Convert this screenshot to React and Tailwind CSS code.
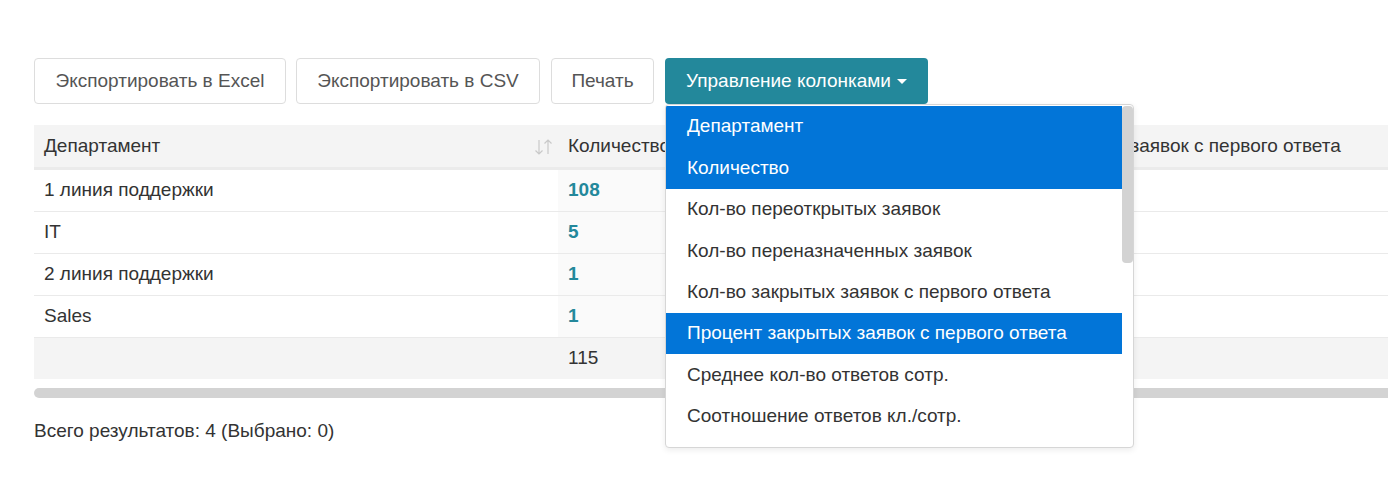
import React from 'react';

const options = [
  { label: 'Департамент', active: true },
  { label: 'Количество', active: true },
  { label: 'Кол-во переоткрытых заявок', active: false },
  { label: 'Кол-во переназначенных заявок', active: false },
  { label: 'Кол-во закрытых заявок с первого ответа', active: false },
  { label: 'Процент закрытых заявок с первого ответа', active: true },
  { label: 'Среднее кол-во ответов сотр.', active: false },
  { label: 'Соотношение ответов кл./сотр.', active: false },
];

const rows = [
  { dept: '1 линия поддержки', count: 108 },
  { dept: 'IT', count: 5 },
  { dept: '2 линия поддержки', count: 1 },
  { dept: 'Sales', count: 1 },
];

function SortIcon() {
  return (
    <svg width="20" height="18" viewBox="0 0 20 18" fill="none" stroke="#c9c9c9" strokeWidth="1.2">
      <path d="M6 2v14M2.5 12.5L6 16l3.5-3.5" />
      <path d="M15 16V2M11.5 5.5L15 2l3.5 3.5" />
    </svg>
  );
}

function App() {
  return (
    <div className="w-full min-h-[489px] overflow-hidden bg-white text-[#333] font-['Liberation_Sans',Arial,sans-serif]">
      <div className="pt-[58px] pl-[34px]">
        {/* Панель кнопок */}
        <div className="flex items-start">
          <button className="w-[252px] h-[46px] border border-[#ddd] rounded-[4px] bg-white text-[19px] text-[#555]">
            Экспортировать в Excel
          </button>
          <button className="w-[244px] h-[46px] ml-[10px] border border-[#ddd] rounded-[4px] bg-white text-[19px] text-[#555]">
            Экспортировать в CSV
          </button>
          <button className="w-[103px] h-[46px] ml-[11px] border border-[#ddd] rounded-[4px] bg-white text-[19px] text-[#555]">
            Печать
          </button>
          <div className="relative ml-[11px]">
            <button className="w-[263px] h-[46px] rounded-[4px] bg-[#23889b] text-[19px] text-white flex items-center justify-center gap-[6px]">
              Управление колонками
              <span className="inline-block w-0 h-0 border-l-[5px] border-r-[5px] border-t-[5px] border-l-transparent border-r-transparent border-t-white mt-[1px]" />
            </button>

            {/* Выпадающий список колонок */}
            <div className="absolute left-0 top-[46px] z-10 w-[469px] h-[344px] bg-white border border-[#d6d6d6] rounded-[4px] shadow-[0_2px_6px_rgba(0,0,0,0.08)] flex overflow-hidden">
              <div className="flex-1 pt-[1px]">
                {options.map((o) => (
                  <div
                    key={o.label}
                    className={`h-[41.4px] pl-[21px] flex items-center text-[19px] whitespace-nowrap ${
                      o.active ? 'bg-[#0275d8] text-white' : 'text-[#333]'
                    }`}
                  >
                    {o.label}
                  </div>
                ))}
              </div>
              <div className="w-[11px] pt-[1px]">
                <div className="h-[157px] bg-[#d3d3d3] rounded-[4px]" />
              </div>
            </div>
          </div>
        </div>

        {/* Таблица */}
        <div className="mt-[21px] overflow-hidden">
          <div className="w-[1500px] text-[19px]">
            <div className="flex h-[45px] bg-[#f4f4f4] border-b-[3px] border-[#ebebeb]">
              <div className="w-[524px] pl-[10px] pr-[5px] flex items-center justify-between">
                <span>Департамент</span>
                <span className="mt-[2px]">
                  <SortIcon />
                </span>
              </div>
              <div className="w-[393px] pl-[10px] flex items-center">Количество</div>
              <div className="flex-1 pl-[10px] flex items-center">Процент закрытых заявок с первого ответа</div>
            </div>

            {rows.map((r) => (
              <div key={r.dept} className="flex h-[42px] border-b border-[#eaeaea]">
                <div className="w-[524px] pl-[10px] flex items-center">{r.dept}</div>
                <div className="w-[393px] pl-[10px] flex items-center bg-[#fafafa] font-bold text-[#23889b]">
                  {r.count}
                </div>
                <div className="flex-1" />
              </div>
            ))}

            <div className="flex h-[41px] bg-[#f4f4f4]">
              <div className="w-[524px]" />
              <div className="w-[393px] pl-[10px] flex items-center">115</div>
              <div className="flex-1" />
            </div>
          </div>
          <div className="mt-[9px] h-[10px] bg-[#d3d3d3] rounded-l-[5px]" />
        </div>

        <div className="mt-[19px] text-[19px] text-[#333]">Всего результатов: 4 (Выбрано: 0)</div>
      </div>
    </div>
  );
}

export default App;
